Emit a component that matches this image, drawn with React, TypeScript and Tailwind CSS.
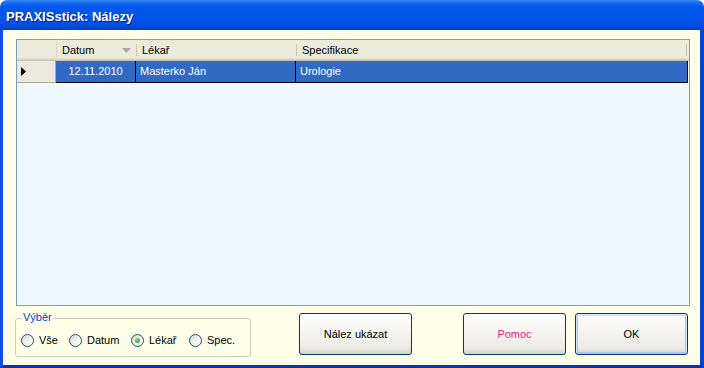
import React from 'react';

const Radio: React.FC<{ label: string; checked?: boolean; className?: string }> = ({ label, checked, className }) => (
  <div className={`flex items-center h-[13px] ${className || ''}`}>
    <span className="w-[13px] h-[13px] shrink-0 rounded-full border border-[#1c5180] bg-[linear-gradient(135deg,#d4d4cc,#f4f4f0_60%,#ffffff)] flex items-center justify-center">
      {checked && <span className="w-[5px] h-[5px] rounded-full bg-[radial-gradient(circle_at_35%_35%,#6fe86f,#1a961a)]" />}
    </span>
    <span className="ml-[5px] leading-[13px]">{label}</span>
  </div>
);

const XpButton: React.FC<{ label: string; className?: string; textClass?: string }> = ({ label, className, textClass }) => (
  <div role="button" className={`h-[42px] rounded-[3px] border border-[#003c74] bg-[linear-gradient(to_bottom,#ffffff,#f6f5f1_40%,#eceae4_85%,#d8d2c6)] flex items-center justify-center ${className || ''}`}>
    <span className={textClass || 'text-black'}>{label}</span>
  </div>
);

export default function App() {
  return (
    <div className="w-[704px] h-[368px] bg-white flex flex-col font-['Liberation_Sans',Arial,sans-serif] text-[11px] text-black">
      {/* title bar */}
      <div className="h-[30px] shrink-0 rounded-t-[7px] bg-[linear-gradient(to_bottom,#3c8ff8_0%,#1a6ef2_8%,#0058ee_22%,#0055ea_60%,#004fe0_82%,#0040c8_100%)] flex items-center pl-[6px] pt-[4px]">
        <span className="text-white font-bold text-[13px] [text-shadow:1px_1px_0_#0a1883]">PRAXISstick: Nálezy</span>
      </div>

      {/* body */}
      <div className="flex-1 flex flex-col bg-[#fffee8] border-l-[3px] border-r-[4px] border-b-[3px] border-l-[#0a50e2] border-r-[#0842d2] border-b-[#0533bf] pl-[12px] pr-[10px] pt-[9px]">
        {/* grid */}
        <div className="ml-px h-[267px] shrink-0 border border-[#7f9db9] bg-[#eef6fe] flex flex-col">
          <div className="flex h-[21px] bg-[#ebeadb] shadow-[inset_0_-1px_0_#cbc7b8,inset_0_-2px_0_#d6d2c2,inset_0_-3px_0_#e2decd]">
            <div className="w-[40px] flex items-center justify-end pb-[2px]">
              <span className="w-px h-[15px] bg-[#d6d3c3]" />
            </div>
            <div className="w-[80px] flex items-center pl-[5px] pb-[1px]">
              <span>Datum</span>
              <svg className="ml-auto mr-[5px]" width="9" height="5" viewBox="0 0 9 5">
                <polygon points="0,0 9,0 4.5,5" fill="#aca899" />
              </svg>
              <span className="w-px h-[12px] bg-[#c7c5b2]" />
            </div>
            <div className="w-[160px] flex items-center pl-[5px] pb-[1px]">
              <span>Lékař</span>
              <span className="ml-auto w-px h-[12px] bg-[#c7c5b2]" />
            </div>
            <div className="flex-1 flex items-center pl-[5px] pb-[1px]">
              <span>Specifikace</span>
              <span className="ml-auto mr-[2px] w-px h-[12px] bg-[#c7c5b2]" />
            </div>
          </div>

          <div className="flex h-[22px]">
            <div className="w-[39px] bg-[#ebe9dd] border-r border-b border-[#aca899] flex items-center pl-[4px]">
              <svg width="5" height="9" viewBox="0 0 5 9">
                <polygon points="0,0 5,4.5 0,9" fill="#000" />
              </svg>
            </div>
            <div className="flex-1 mr-px flex bg-[#316ac5] border-b border-black text-white">
              <div className="w-[80px] border-r border-black flex items-center justify-center">12.11.2010</div>
              <div className="w-[160px] border-r border-black flex items-center pl-[4px]">Masterko Ján</div>
              <div className="flex-1 border-r border-black flex items-center pl-[4px]">Urologie</div>
            </div>
          </div>
        </div>

        {/* bottom row */}
        <div className="flex items-start mt-[7px]">
          <div className="relative mt-[5px] w-[236px] h-[39px] border border-[#d0d0bf] rounded-[3px] flex pt-[15px] pl-[5px]">
            <span className="absolute -top-[8px] left-[6px] px-px leading-[13px] bg-[#fffee8] text-[#0046d5]">Výběr</span>
            <Radio label="Vše" className="w-[48px]" />
            <Radio label="Datum" className="w-[62px]" />
            <Radio label="Lékař" checked className="w-[58px]" />
            <Radio label="Spec." />
          </div>
          <XpButton label="Nález ukázat" className="ml-[48px] w-[113px]" />
          <XpButton label="Pomoc" className="ml-[51px] w-[103px]" textClass="text-[#f0168a]" />
          <XpButton label="OK" className="ml-[9px] w-[113px] shadow-[inset_0_1px_0_1px_#cee7ff,inset_0_0_0_2px_#a8c4ee]" />
        </div>
      </div>
    </div>
  );
}
